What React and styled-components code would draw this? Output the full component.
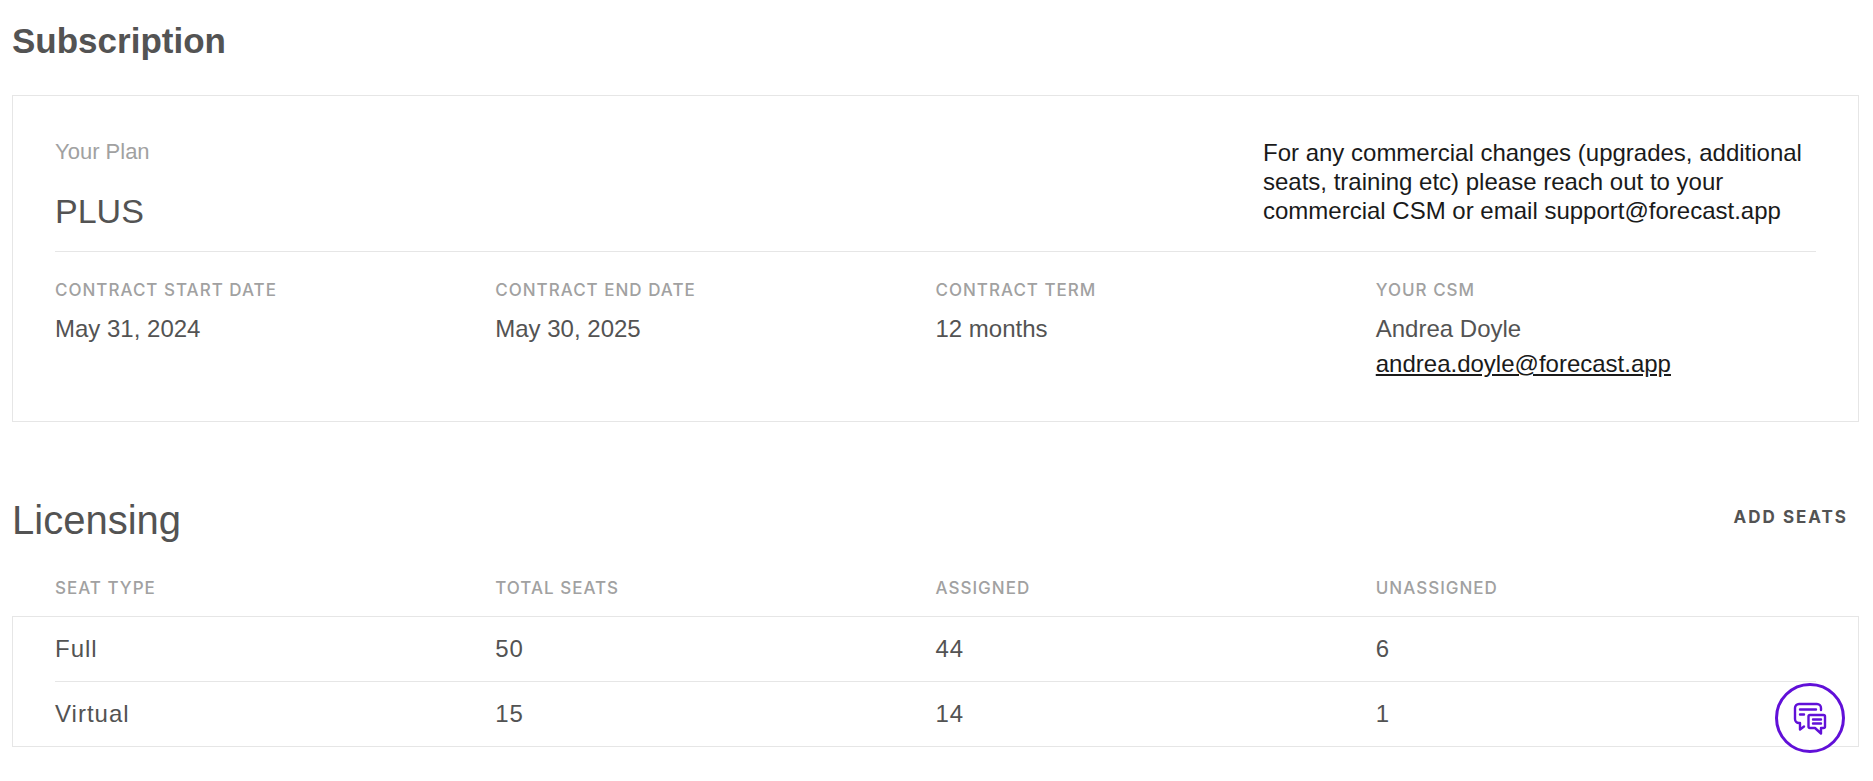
import React from "react";
import styled, {createGlobalStyle, ThemeProvider} from "styled-components";

const theme = {
    text: "#535353",
    text_dark: "#1a1a1a",
    text_muted: "#a1a1a1",
    border: "#e6e6e6",
    brand: "#6110d8",
};

const GlobalStyle = createGlobalStyle`
  * {
    box-sizing: border-box;
  }

  body {
    margin: 0;
    background-color: white;
    color: ${props => props.theme.text};
    font-family: "Liberation Sans", Arial, sans-serif;
    font-size: 24px;
  }
`;

const Page = styled.main`
  padding: 19px 14px 34px 12px;
`;

const Title = styled.h1`
  margin: 0 0 32px;
  font-size: 35px;
  font-weight: 700;
  line-height: 44px;
`;

const Card = styled.section`
  padding: 42px 42px 40px;
  border: 1px solid ${props => props.theme.border};
`;

const PlanRow = styled.div`
  display: flex;
  justify-content: space-between;
  padding-bottom: 18px;
  border-bottom: 1px solid ${props => props.theme.border};
`;

const PlanLabel = styled.div`
  margin-bottom: 23px;
  color: ${props => props.theme.text_muted};
  font-size: 22px;
  line-height: 28px;
`;

const PlanName = styled.div`
  font-size: 34px;
  line-height: 44px;
`;

const Notice = styled.p`
  flex: 0 1 553px;
  margin: 0;
  color: ${props => props.theme.text_dark};
  line-height: 29px;
`;

const Details = styled.dl`
  display: grid;
  grid-template-columns: repeat(4, 1fr);
  margin: 0;
  padding-top: 28px;
`;

const DetailLabel = styled.dt`
  margin-bottom: 11px;
  color: ${props => props.theme.text_muted};
  font-family: Inter, sans-serif;
  font-size: 17px;
  font-weight: 500;
  letter-spacing: 1px;
  line-height: 20px;
  text-transform: uppercase;
`;

const DetailValue = styled.dd`
  margin: 0;
  line-height: 35px;
`;

const MailLink = styled.a`
  color: ${props => props.theme.text_dark};
  text-decoration: underline;
`;

const SectionHeader = styled.div`
  display: flex;
  justify-content: space-between;
  align-items: flex-start;
  margin: 76px 0 36px;
`;

const SectionTitle = styled.h2`
  margin: 0;
  font-size: 40px;
  font-weight: 400;
  line-height: 44px;
`;

const TextButton = styled.button`
  padding: 0 11px;
  border: none;
  background: none;
  color: inherit;
  font-family: Inter, sans-serif;
  font-size: 17px;
  font-weight: 700;
  letter-spacing: 2px;
  line-height: 38px;
  text-transform: uppercase;
  cursor: pointer;
`;

const Table = styled.table`
  display: block;
`;

const TableHead = styled.thead`
  display: block;
  padding: 0 1px 18px;
`;

const TableBody = styled.tbody`
  display: block;
  border: 1px solid ${props => props.theme.border};
`;

const TableRow = styled.tr`
  display: grid;
  grid-template-columns: repeat(4, 1fr);
  margin: 0 42px;

  & + & {
    border-top: 1px solid ${props => props.theme.border};
  }
`;

const HeadCell = styled.th`
  padding: 0;
  color: ${props => props.theme.text_muted};
  font-family: Inter, sans-serif;
  font-size: 17px;
  font-weight: 500;
  letter-spacing: 1px;
  line-height: 20px;
  text-align: left;
  text-transform: uppercase;
`;

const Cell = styled.td`
  padding: 0;
  letter-spacing: 1px;
  line-height: 64px;
`;

const ChatButton = styled.button`
  display: flex;
  align-items: center;
  justify-content: center;
  position: fixed;
  right: 28px;
  bottom: 28px;
  width: 70px;
  height: 70px;
  padding: 0;
  border: 3px solid ${props => props.theme.brand};
  border-radius: 50%;
  background-color: white;
  color: ${props => props.theme.brand};
  cursor: pointer;
`;

const details = [
    {label: "Contract start date", value: "May 31, 2024"},
    {label: "Contract end date", value: "May 30, 2025"},
    {label: "Contract term", value: "12 months"},
    {label: "Your CSM", value: "Andrea Doyle", email: "andrea.doyle@forecast.app"},
];

const columns = ["Seat type", "Total seats", "Assigned", "Unassigned"];

const seats = [
    {type: "Full", total: 50, assigned: 44},
    {type: "Virtual", total: 15, assigned: 14},
];

function ChatIcon() {
    return (
        <svg width="34" height="34" viewBox="0 0 34 34" fill="none" stroke="currentColor" strokeWidth="2.4"
             strokeLinecap="round" strokeLinejoin="round" aria-hidden="true">
            <path d="M28 9V7a4 4 0 0 0-4-4H6a4 4 0 0 0-4 4v11a4 4 0 0 0 4 4h1v6.5l4-3"/>
            <path d="M7 8.5h16M7 13.5h4"/>
            <path d="M17 14h13.5a1.5 1.5 0 0 1 1.5 1.5v10a1.5 1.5 0 0 1-1.5 1.5H28v5.5L22 27h-5a1.5 1.5 0 0 1-1.5-1.5v-10A1.5 1.5 0 0 1 17 14z"/>
            <path d="M20 18.5h8M20 22.5h8"/>
        </svg>
    )
}

function App() {
    return (
        <ThemeProvider theme={theme}>
            <GlobalStyle/>
            <Page>
                <Title>Subscription</Title>
                <Card>
                    <PlanRow>
                        <div>
                            <PlanLabel>Your Plan</PlanLabel>
                            <PlanName>PLUS</PlanName>
                        </div>
                        <Notice>
                            For any commercial changes (upgrades, additional seats, training etc) please
                            reach out to your commercial CSM or email support@forecast.app
                        </Notice>
                    </PlanRow>
                    <Details>
                        {details.map(item => (
                            <div key={item.label}>
                                <DetailLabel>{item.label}</DetailLabel>
                                <DetailValue>{item.value}</DetailValue>
                                {item.email &&
                                    <DetailValue>
                                        <MailLink href={"mailto:" + item.email}>{item.email}</MailLink>
                                    </DetailValue>
                                }
                            </div>
                        ))}
                    </Details>
                </Card>

                <SectionHeader>
                    <SectionTitle>Licensing</SectionTitle>
                    <TextButton type="button">Add seats</TextButton>
                </SectionHeader>
                <Table>
                    <TableHead>
                        <TableRow>
                            {columns.map(column => <HeadCell key={column} scope="col">{column}</HeadCell>)}
                        </TableRow>
                    </TableHead>
                    <TableBody>
                        {seats.map(seat => (
                            <TableRow key={seat.type}>
                                <Cell>{seat.type}</Cell>
                                <Cell>{seat.total}</Cell>
                                <Cell>{seat.assigned}</Cell>
                                <Cell>{seat.total - seat.assigned}</Cell>
                            </TableRow>
                        ))}
                    </TableBody>
                </Table>
            </Page>
            <ChatButton type="button" aria-label="Open chat">
                <ChatIcon/>
            </ChatButton>
        </ThemeProvider>
    )
}

export default App;
